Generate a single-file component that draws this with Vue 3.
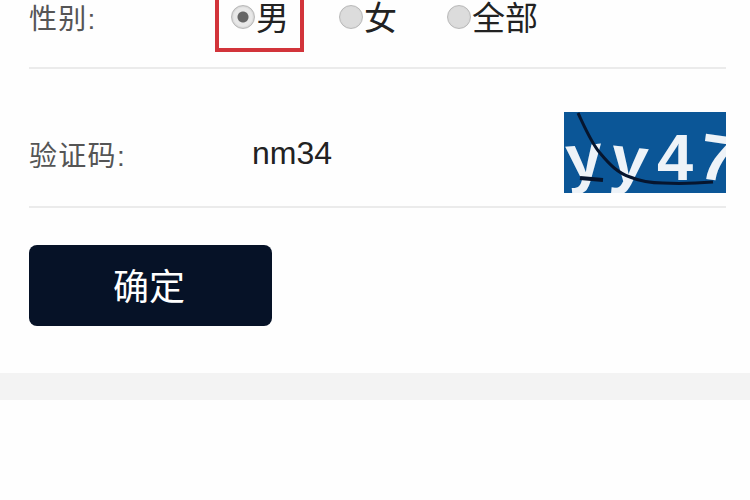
<script setup>
const options = [
  { label: '男', checked: true },
  { label: '女', checked: false },
  { label: '全部', checked: false },
]
</script>

<template>
  <div class="page">
    <section class="form">
      <div class="row row-gender">
        <span class="label">性别:</span>
        <div class="options">
          <div v-for="o in options" :key="o.label" class="option">
            <span class="radio" :class="{ on: o.checked }"></span>
            <span class="opt-text">{{ o.label }}</span>
          </div>
        </div>
        <div class="highlight"></div>
      </div>
      <div class="row row-code">
        <span class="label code-label">验证码:</span>
        <span class="code-value">nm34</span>
        <svg class="captcha" viewBox="0 0 162 81" width="162" height="81">
          <rect width="162" height="81" fill="#0b5697" />
          <g class="cap-text" fill="#eef3f8">
            <text x="2" y="68" font-size="66" transform="rotate(-5 20 50)">y</text>
            <text x="47" y="70" font-size="66" transform="rotate(6 65 50)">y</text>
            <text x="93" y="68" font-size="65">4</text>
            <text x="136" y="68" font-size="65" transform="rotate(8 150 45)">7</text>
          </g>
          <path d="M14 1C22 18 28 32 36 41C46 53 54 61 66 65C78 70 90 71 99 71C118 72 136 71 149 70" fill="none" stroke="#06152e" stroke-width="3" />
          <path d="M16 66L39 68" stroke="#06152e" stroke-width="4" />
        </svg>
      </div>
      <button class="submit" type="button">确定</button>
    </section>
    <div class="band"></div>
  </div>
</template>

<style scoped>
.page {
  width: 750px;
  height: 500px;
  overflow: hidden;
  background: #fefefe;
  font-family: "Liberation Sans", "Noto Sans CJK SC", sans-serif;
}
.form {
  padding: 0 24px 47px 29px;
}
.row {
  position: relative;
  display: flex;
  align-items: center;
  border-bottom: 2px solid #ebebeb;
}
.row-gender {
  height: 67px;
  align-items: flex-start;
}
.label {
  width: 202px;
  font-size: 28px;
  line-height: 40px;
  letter-spacing: 1.3px;
  color: #555;
}
.options {
  display: flex;
  gap: 50px;
}
.option {
  display: flex;
  align-items: flex-start;
}
.radio {
  box-sizing: border-box;
  width: 24px;
  height: 24px;
  margin-top: 5px;
  border-radius: 50%;
  border: 1px solid #b9b9b9;
  background: radial-gradient(circle, #dcdcdc 0 60%, #c9c9c9 100%);
}
.radio.on {
  background: radial-gradient(circle, #666 0 5px, #e8e8e8 6px 9px, #c8c8c8 12px);
}
.opt-text {
  margin-left: 1px;
  font-size: 33px;
  line-height: 38px;
  color: #222;
}
.highlight {
  position: absolute;
  left: 186px;
  top: -6px;
  width: 89px;
  height: 58px;
  box-sizing: border-box;
  border: 4px solid #d2343a;
}
.row-code {
  box-sizing: content-box;
  height: 107px;
  padding-top: 30px;
}
.code-label {
  width: 223px;
  margin-top: 8px;
}
.code-value {
  font-size: 32px;
  line-height: 38px;
  color: #222;
}
.captcha {
  display: block;
  margin-left: auto;
}
.cap-text {
  font-family: "Liberation Sans", sans-serif;
  font-weight: 700;
}
.submit {
  display: block;
  width: 243px;
  height: 81px;
  margin-top: 37px;
  padding: 0 3px 3px 0;
  border: 0;
  border-radius: 8px;
  background: #061227;
  color: #fff;
  font-family: inherit;
  font-size: 36px;
}
.band {
  height: 27px;
  background: #f3f3f3;
}
</style>
